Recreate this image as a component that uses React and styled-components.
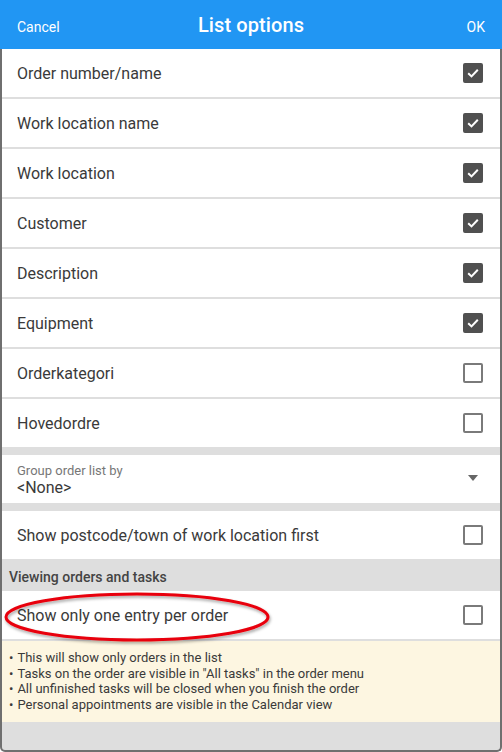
import React, { useState } from 'react';
import styled, { createGlobalStyle } from 'styled-components';

const GlobalStyle = createGlobalStyle`
  html, body {
    margin: 0;
    padding: 0;
    background: #ffffff;
  }
  body {
    font-family: Roboto, "Liberation Sans", sans-serif;
  }
`;

const Screen = styled.div`
  width: 502px;
  height: 752px;
  display: flex;
  flex-direction: column;
  overflow: hidden;
  position: relative;
`;

const Header = styled.header`
  height: 49px;
  flex-shrink: 0;
  background: #2196f3;
  display: grid;
  grid-template-columns: 1fr auto 1fr;
  align-items: center;
  padding: 0 17px;
  color: #ffffff;
`;

const HeaderButton = styled.span`
  font-size: 14px;
  padding-top: 5px;
  justify-self: ${(p) => (p.$right ? 'end' : 'start')};
`;

const Title = styled.h1`
  margin: 0;
  font-size: 20px;
  font-weight: 500;
  letter-spacing: 0.1px;
`;

const Body = styled.div`
  flex: 1;
  display: flex;
  flex-direction: column;
  background: #dedede;
  border: 2px solid #6f6f6f;
  border-top: none;
  border-radius: 0 0 5px 5px;
  position: relative;
`;

const Row = styled.div`
  height: 48px;
  flex-shrink: 0;
  display: flex;
  align-items: center;
  justify-content: space-between;
  background: #ffffff;
  padding: 0 17px 0 15px;
  margin-bottom: ${(p) => p.$gap || 0}px;
`;

const Label = styled.span`
  font-size: 16px;
  color: #3a3a3a;
`;

const Box = styled.span`
  width: 20px;
  height: 20px;
  box-sizing: border-box;
  border-radius: 2px;
  display: flex;
  align-items: center;
  justify-content: center;
  background: ${(p) => (p.$checked ? '#505050' : '#ffffff')};
  border: 2px solid ${(p) => (p.$checked ? '#505050' : '#7a7a7a')};
`;

const SelectRow = styled(Row)`
  align-items: center;
`;

const SelectText = styled.div`
  display: flex;
  flex-direction: column;
  padding-top: 2px;
`;

const SmallLabel = styled.span`
  font-size: 13px;
  color: #777777;
  line-height: 15px;
`;

const SelectValue = styled.span`
  font-size: 16px;
  color: #3a3a3a;
  line-height: 20px;
`;

const Arrow = styled.span`
  width: 0;
  height: 0;
  border-left: 5px solid transparent;
  border-right: 5px solid transparent;
  border-top: 6px solid #666666;
  margin-right: 5px;
  margin-top: -2px;
`;

const SectionTitle = styled.div`
  height: 32px;
  flex-shrink: 0;
  display: flex;
  align-items: center;
  padding: 4px 7px 0;
  box-sizing: border-box;
  font-size: 14px;
  font-weight: 500;
  color: #444444;
  background: #dedede;
`;

const Note = styled.ul`
  margin: 0;
  margin-top: 2px;
  padding: 9px 7px;
  list-style: none;
  background: #fdf6e1;
  font-size: 13px;
  line-height: 15.7px;
  color: #3a3a3a;
`;

const NoteItem = styled.li`
  &::before {
    content: '•';
    margin-right: 4px;
  }
`;

const Highlight = styled.svg`
  position: absolute;
  left: 0;
  top: 539px;
  overflow: visible;
  pointer-events: none;
`;

const Check = ({ checked }) => (
  <Box $checked={checked}>
    {checked && (
      <svg width="14" height="14" viewBox="0 0 14 14">
        <path d="M2.2 7.3 L5.5 10.4 L11.8 3.8" fill="none" stroke="#ffffff" strokeWidth="2" />
      </svg>
    )}
  </Box>
);

const options = [
  { label: 'Order number/name', checked: true },
  { label: 'Work location name', checked: true },
  { label: 'Work location', checked: true },
  { label: 'Customer', checked: true },
  { label: 'Description', checked: true },
  { label: 'Equipment', checked: true },
  { label: 'Orderkategori', checked: false },
  { label: 'Hovedordre', checked: false },
];

const notes = [
  'This will show only orders in the list',
  'Tasks on the order are visible in "All tasks" in the order menu',
  'All unfinished tasks will be closed when you finish the order',
  'Personal appointments are visible in the Calendar view',
];

export default function App() {
  const [items] = useState(options);

  return (
    <Screen>
      <GlobalStyle />
      <Header>
        <HeaderButton>Cancel</HeaderButton>
        <Title>List options</Title>
        <HeaderButton $right>OK</HeaderButton>
      </Header>
      <Body>
        {items.map((item, i) => (
          <Row key={item.label} $gap={i === items.length - 1 ? 8 : 2}>
            <Label>{item.label}</Label>
            <Check checked={item.checked} />
          </Row>
        ))}
        <SelectRow $gap={8}>
          <SelectText>
            <SmallLabel>Group order list by</SmallLabel>
            <SelectValue>&lt;None&gt;</SelectValue>
          </SelectText>
          <Arrow />
        </SelectRow>
        <Row>
          <Label>Show postcode/town of work location first</Label>
          <Check checked={false} />
        </Row>
        <SectionTitle>Viewing orders and tasks</SectionTitle>
        <Row>
          <Label>Show only one entry per order</Label>
          <Check checked={false} />
        </Row>
        <Note>
          {notes.map((n) => (
            <NoteItem key={n}>{n}</NoteItem>
          ))}
        </Note>
        <Highlight width="280" height="60">
          <defs>
            <filter id="sh" x="-10%" y="-30%" width="120%" height="160%">
              <feDropShadow dx="1" dy="2" stdDeviation="1.5" floodColor="#000" floodOpacity="0.35" />
            </filter>
          </defs>
          <ellipse cx="135" cy="29" rx="131" ry="23" fill="none" stroke="#e8000b" strokeWidth="3" filter="url(#sh)" />
        </Highlight>
      </Body>
    </Screen>
  );
}
